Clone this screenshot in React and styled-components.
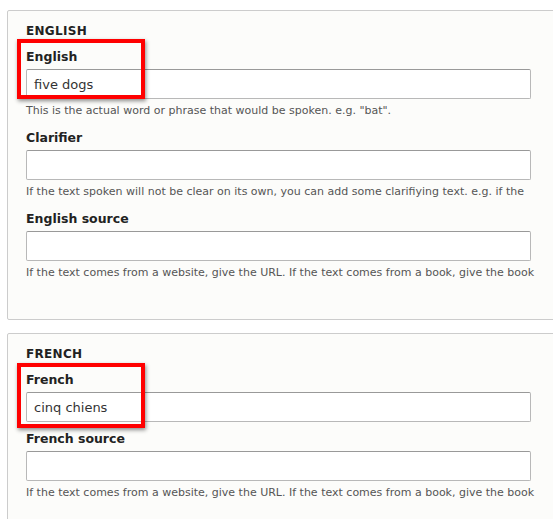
import styled, { createGlobalStyle } from "styled-components";

const Global = createGlobalStyle`
  body { margin: 0; background: #fff; overflow: hidden; font-family: "DejaVu Sans", "Open Sans", sans-serif; color: #222; }
`;

const Page = styled.div`
  padding: 10px 0 0 7px;
  width: 620px;
`;

const Fieldset = styled.div`
  background: #fcfcfa;
  border: 1px solid #ccc;
  border-radius: 2px;
  padding: 13px 18px 0 18px;
  margin-bottom: 13px;
  height: ${(p) => p.$h}px;
  box-sizing: border-box;
`;

const Legend = styled.div`
  font-size: 12px;
  font-weight: bold;
  letter-spacing: 0.3px;
  text-transform: uppercase;
  color: #222;
  margin-bottom: 10px;
`;

const Field = styled.div`
  position: relative;
  margin-bottom: ${(p) => p.$mb ?? 12}px;
`;

const Label = styled.div`
  font-size: 12.5px;
  font-weight: bold;
  line-height: 18px;
  margin-bottom: 3px;
`;

const Input = styled.div`
  width: 505px;
  height: 30px;
  box-sizing: border-box;
  border: 1px solid #b8b8b8;
  border-top-color: #999;
  border-radius: 2px;
  background: #fff;
  font-size: 13px;
  color: #333;
  padding: 0 7px;
  display: flex;
  align-items: center;
`;

const Desc = styled.div`
  font-size: 11px;
  color: #555;
  margin-top: 5px;
  white-space: nowrap;
`;

const Highlight = styled.div`
  position: absolute;
  left: -9px;
  top: ${(p) => p.$top}px;
  width: 128px;
  height: ${(p) => p.$h}px;
  box-sizing: border-box;
  border: 4px solid #f00;
  box-shadow: 1px 2px 4px rgba(0, 0, 0, 0.45);
  pointer-events: none;
`;

export default function App() {
  return (
    <>
      <Global />
      <Page>
        <Fieldset $h={310}>
          <Legend>English</Legend>
          <Field>
            <Label>English</Label>
            <Input>five dogs</Input>
            <Desc>This is the actual word or phrase that would be spoken. e.g. "bat".</Desc>
            <Highlight $top={-9} $h={60} />
          </Field>
          <Field>
            <Label>Clarifier</Label>
            <Input />
            <Desc>If the text spoken will not be clear on its own, you can add some clarifiying text. e.g. if the</Desc>
          </Field>
          <Field>
            <Label>English source</Label>
            <Input />
            <Desc>If the text comes from a website, give the URL. If the text comes from a book, give the book</Desc>
          </Field>
        </Fieldset>
        <Fieldset $h={200}>
          <Legend>French</Legend>
          <Field $mb={8}>
            <Label>French</Label>
            <Input>cinq chiens</Input>
            <Highlight $top={-8} $h={65} />
          </Field>
          <Field>
            <Label>French source</Label>
            <Input />
            <Desc>If the text comes from a website, give the URL. If the text comes from a book, give the book</Desc>
          </Field>
        </Fieldset>
      </Page>
    </>
  );
}
